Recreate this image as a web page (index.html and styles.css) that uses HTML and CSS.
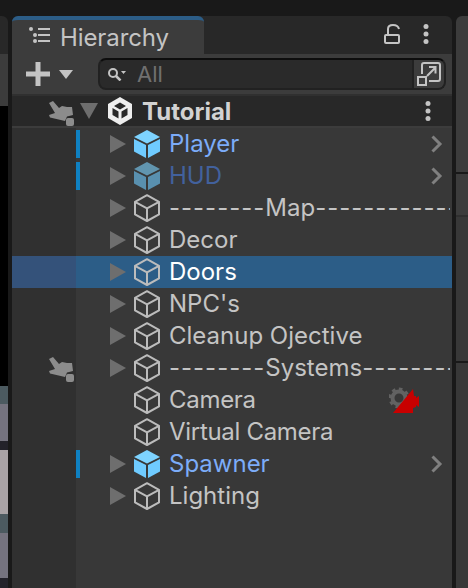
FILE: index.html
```html
<!DOCTYPE html>
<html>
<head>
    <title>Hierarchy</title>
    <link rel="stylesheet" href="styles.css">
</head>
<body>
    <svg class="defs" width="0" height="0">
        <symbol id="cube" viewBox="0 0 26 28">
            <path d="M13 1.2 25 7.8V20.400L13 27 1 20.400V7.800ZM1 7.800 13 14.400 25 7.800M13 14.400V27" fill="none" stroke="#bcbcbc" stroke-width="2" stroke-linejoin="round"/>
        </symbol>
        <symbol id="prefab" viewBox="0 0 26 28">
            <path d="M13 0 26 7 13 13.400 0 7Z" fill="#7dd3ff"/>
            <path d="M0 9 12 15V28L0 21.500Z" fill="#6fcbff"/>
            <path d="M26 9 14 15V28L26 21.500Z" fill="#6fcbff"/>
        </symbol>
        <symbol id="fold" viewBox="0 0 16 20">
            <path d="M0 1 16 10 0 19Z" fill="#6e6e6e"/>
        </symbol>
        <symbol id="chevron" viewBox="0 0 12 18">
            <path d="M1.500 1.500 9 9 1.500 16.500" fill="none" stroke="#808080" stroke-width="3"/>
        </symbol>
        <symbol id="hand" viewBox="0 0 25 26">
            <path d="M0 2 4 0 10 7 13 5 18 6 23 6 24 14 18 15.500 16 20 1 16.500 0 14 6 12Z" fill="#8c8c8c"/>
            <rect x="17" y="17" width="8" height="8" rx="2" fill="#8c8c8c"/>
        </symbol>
    </svg>

    <div class="shell">
        <div class="side-left">
            <div class="sl-tab"></div>
            <div class="sl-bar"></div>
            <div class="sl-black"></div>
            <div class="sl-band"></div>
            <div class="sl-lilac"></div>
            <div class="sl-dark"></div>
            <div class="sl-light"></div>
            <div class="sl-band sl-band2"></div>
            <div class="sl-lilac sl-lilac2"></div>
            <div class="sl-dark"></div>
        </div>

        <div class="panel">
            <div class="tabbar">
                <div class="tab">
                    <svg class="tab-icon" width="21" height="16" viewBox="0 0 21 16">
                        <circle cx="2" cy="2" r="2" fill="#c4c4c4"/>
                        <path d="M9 2H21M9 8H21M9 14H21" stroke="#c4c4c4" stroke-width="2"/>
                        <circle cx="6" cy="8" r="2" fill="#c4c4c4"/>
                        <circle cx="6" cy="14" r="2" fill="#c4c4c4"/>
                    </svg>
                    <span>Hierarchy</span>
                </div>
                <div class="tab-tools">
                    <svg width="16" height="20" viewBox="0 0 16 20">
                        <path d="M4 10V5Q4 1 9 1T15 5" fill="none" stroke="#c4c4c4" stroke-width="2"/>
                        <rect x="1" y="11" width="14" height="8" rx="1" fill="none" stroke="#c4c4c4" stroke-width="2"/>
                    </svg>
                    <svg width="6" height="20" viewBox="0 0 6 20">
                        <circle cx="3" cy="2.500" r="2.500" fill="#c4c4c4"/>
                        <circle cx="3" cy="10" r="2.500" fill="#c4c4c4"/>
                        <circle cx="3" cy="17.500" r="2.500" fill="#c4c4c4"/>
                    </svg>
                </div>
            </div>

            <div class="toolbar">
                <svg class="plus" width="24" height="24" viewBox="0 0 24 24">
                    <path d="M12 0V24M0 12H24" stroke="#c4c4c4" stroke-width="5"/>
                </svg>
                <svg class="plus-arrow" width="14" height="9" viewBox="0 0 14 9">
                    <path d="M0 0H14L7 9Z" fill="#c4c4c4"/>
                </svg>
                <div class="search">
                    <svg class="search-icon" width="18" height="13" viewBox="0 0 18 13">
                        <circle cx="5" cy="5" r="4" fill="none" stroke="#c4c4c4" stroke-width="2"/>
                        <path d="M8 8 12.500 12.500" stroke="#c4c4c4" stroke-width="2.500"/>
                        <path d="M13 3H18L15.500 6Z" fill="#c4c4c4"/>
                    </svg>
                    <span class="search-text">All</span>
                    <div class="search-btn">
                        <svg width="24" height="24" viewBox="0 0 24 24">
                            <path d="M5 12V3Q5 1 7 1H21Q23 1 23 3V17Q23 19 21 19H12" fill="none" stroke="#c4c4c4" stroke-width="2"/>
                            <rect x="1" y="15" width="8" height="8" fill="none" stroke="#c4c4c4" stroke-width="2"/>
                            <path d="M10 14 18 6M12 5H18.500V11.500" fill="none" stroke="#c4c4c4" stroke-width="2"/>
                        </svg>
                    </div>
                </div>
            </div>

            <div class="scene-row">
                <div class="gutter">
                    <svg class="hand" width="25" height="26"><use href="#hand"/></svg>
                </div>
                <svg class="scene-arrow" width="18" height="16" viewBox="0 0 18 16">
                    <path d="M0 0H18L9 16Z" fill="#6e6e6e"/>
                </svg>
                <svg class="unity" width="24" height="28" viewBox="0 0 24 28">
                    <path d="M12 0 24 7V21L12 28 0 21V7Z" fill="#eee"/>
                    <path d="M12 5.500 18 9 12 12.500 6 9ZM4.500 11 10.500 14.500V21.500L4.500 18ZM19.500 11V18L13.500 21.500V14.500Z" fill="#282828"/>
                </svg>
                <span class="scene-name">Tutorial</span>
                <svg class="scene-menu" width="6" height="20" viewBox="0 0 6 20">
                    <circle cx="3" cy="2.500" r="2.500" fill="#c4c4c4"/>
                    <circle cx="3" cy="10" r="2.500" fill="#c4c4c4"/>
                    <circle cx="3" cy="17.500" r="2.500" fill="#c4c4c4"/>
                </svg>
            </div>

            <div class="list">
                <div class="row">
                    <i class="bar"></i>
                    <svg class="fold" width="16" height="20"><use href="#fold"/></svg>
                    <svg class="cube" width="26" height="28"><use href="#prefab"/></svg>
                    <span class="name name-prefab">Player</span>
                    <svg class="chevron" width="12" height="18"><use href="#chevron"/></svg>
                </div>
                <div class="row">
                    <i class="bar"></i>
                    <svg class="fold" width="16" height="20"><use href="#fold"/></svg>
                    <svg class="cube cube-off" width="26" height="28"><use href="#prefab"/></svg>
                    <span class="name name-off">HUD</span>
                    <svg class="chevron" width="12" height="18"><use href="#chevron"/></svg>
                </div>
                <div class="row">
                    <i class="bar bar-none"></i>
                    <svg class="fold" width="16" height="20"><use href="#fold"/></svg>
                    <svg class="cube" width="26" height="28"><use href="#cube"/></svg>
                    <span class="name name-clip"><span class="dash">--------</span>Map<span class="dash">------------</span></span>
                </div>
                <div class="row">
                    <i class="bar bar-none"></i>
                    <svg class="fold" width="16" height="20"><use href="#fold"/></svg>
                    <svg class="cube" width="26" height="28"><use href="#cube"/></svg>
                    <span class="name">Decor</span>
                </div>
                <div class="row row-selected">
                    <i class="bar bar-none"></i>
                    <svg class="fold fold-selected" width="16" height="20"><use href="#fold"/></svg>
                    <svg class="cube" width="26" height="28"><use href="#cube"/></svg>
                    <span class="name name-selected">Doors</span>
                </div>
                <div class="row">
                    <i class="bar bar-none"></i>
                    <svg class="fold" width="16" height="20"><use href="#fold"/></svg>
                    <svg class="cube" width="26" height="28"><use href="#cube"/></svg>
                    <span class="name">NPC's</span>
                </div>
                <div class="row">
                    <i class="bar bar-none"></i>
                    <svg class="fold" width="16" height="20"><use href="#fold"/></svg>
                    <svg class="cube" width="26" height="28"><use href="#cube"/></svg>
                    <span class="name">Cleanup Ojective</span>
                </div>
                <div class="row">
                    <svg class="hand row-hand" width="25" height="26"><use href="#hand"/></svg>
                    <i class="bar bar-none"></i>
                    <svg class="fold" width="16" height="20"><use href="#fold"/></svg>
                    <svg class="cube" width="26" height="28"><use href="#cube"/></svg>
                    <span class="name name-clip"><span class="dash">--------</span>Systems<span class="dash">--------</span></span>
                </div>
                <div class="row">
                    <i class="bar bar-none"></i>
                    <i class="fold-none"></i>
                    <svg class="cube" width="26" height="28"><use href="#cube"/></svg>
                    <span class="name name-tight">Camera</span>
                    <svg class="gizmo" width="32" height="28" viewBox="0 0 32 28">
                        <circle cx="10" cy="12" r="6.500" fill="none" stroke="#626262" stroke-width="4"/>
                        <circle cx="10" cy="12" r="9" fill="none" stroke="#626262" stroke-width="3" stroke-dasharray="3.500 3.500"/>
                        <path d="M4 27 24 3 25 10 27 10 27 12 30 10 30 21 27 19 27 21 24 22 24 27Z" fill="#c80000"/>
                    </svg>
                </div>
                <div class="row">
                    <i class="bar bar-none"></i>
                    <i class="fold-none"></i>
                    <svg class="cube" width="26" height="28"><use href="#cube"/></svg>
                    <span class="name name-tight">Virtual Camera</span>
                </div>
                <div class="row">
                    <i class="bar"></i>
                    <svg class="fold" width="16" height="20"><use href="#fold"/></svg>
                    <svg class="cube" width="26" height="28"><use href="#prefab"/></svg>
                    <span class="name name-prefab">Spawner</span>
                    <svg class="chevron" width="12" height="18"><use href="#chevron"/></svg>
                </div>
                <div class="row">
                    <i class="bar bar-none"></i>
                    <svg class="fold" width="16" height="20"><use href="#fold"/></svg>
                    <svg class="cube" width="26" height="28"><use href="#cube"/></svg>
                    <span class="name">Lighting</span>
                </div>
            </div>
        </div>

        <div class="side-right">
            <div class="sr-a"></div>
            <div class="sr-b"></div>
            <div class="sr-c"></div>
            <div class="sr-d"></div>
        </div>
    </div>
</body>
</html>
```

FILE: styles.css
```css
html, body { margin: 0; height: 100%; }
body { background: #191919; font-family: Inter, "Noto Sans", sans-serif; font-variant-ligatures: none; font-feature-settings: "calt" 0; overflow: hidden; }
.defs { display: block; height: 0; }
svg { display: block; flex: none; }

.shell { display: flex; height: 588px; gap: 4px; }

.side-left { width: 8px; padding-top: 16px; display: flex; flex-direction: column; flex: none; }
.sl-tab { height: 38px; background: #282828; border-top-right-radius: 6px; }
.sl-bar { height: 52px; background: #3c3c3c; }
.sl-black { height: 281px; background: #000; }
.sl-band { height: 18px; background: #4c5a60; }
.sl-lilac { height: 37px; background: #75737f; }
.sl-dark { height: 10px; background: #23222a; }
.sl-light { height: 64px; background: #a9a3a6; }
.sl-band2 { height: 19px; }
.sl-lilac2 { height: 45px; }

.panel { width: 440px; margin-top: 16px; display: flex; flex-direction: column; flex: none; }

.tabbar { height: 38px; background: #282828; display: flex; justify-content: space-between; border-radius: 6px 6px 0 0; }
.tab { width: 192px; box-sizing: border-box; background: #3c3c3c; border-top: 4px solid #2c5d87; border-radius: 6px 6px 0 0; display: flex; align-items: center; padding-left: 17px; gap: 11px; color: #c4c4c4; font-size: 24px; }
.tab span { letter-spacing: -0.1px; margin-left: -1px; }
.tab-icon { margin-bottom: 4px; }
.tab-tools { display: flex; align-items: center; gap: 23px; padding-right: 23px; padding-bottom: 2px; }

.toolbar { height: 40px; background: #3c3c3c; display: flex; align-items: center; padding-left: 14px; border-bottom: 2px solid #303030; }
.plus { margin-right: 9px; }
.plus-arrow { margin-right: 25px; }
.search { width: 348px; height: 32px; box-sizing: border-box; background: #2a2a2a; border: 2px solid #212121; border-top-color: #0d0d0d; border-radius: 8px; display: flex; align-items: center; padding-left: 8px; }
.search-icon { margin-right: 11px; }
.search-text { color: #707070; font-size: 22px; flex: 1; }
.search-btn { width: 32px; height: 28px; box-sizing: border-box; background: #3c3c3c; border-left: 2px solid #212121; border-radius: 0 6px 6px 0; display: flex; align-items: center; justify-content: center; }

.scene-row { height: 30px; background: #282828; border-bottom: 2px solid #3c3c3c; display: flex; align-items: center; }
.gutter { width: 64px; height: 100%; position: relative; flex: none; }
.hand { position: absolute; left: 37px; top: 5px; }
.scene-arrow { margin-left: 4px; margin-right: 10px; }
.unity { margin-right: 10px; }
.scene-name { color: #d2d2d2; font-size: 24px; font-weight: 700; flex: 1; }
.scene-menu { margin-right: 21px; }

.list { flex: 1; background: linear-gradient(90deg, #303030 64px, #383838 64px); }
.row { height: 32px; display: flex; align-items: center; padding-left: 64px; position: relative; overflow: hidden; }
.row-selected { background: linear-gradient(90deg, #34527a 64px, #2c5d87 64px); }
.bar { width: 4px; height: 28px; background: #0f81c2; flex: none; margin-right: 30px; }
.bar-none { background: none; }
.fold { margin-right: 8px; }
.fold-selected path { fill: #6f93ae; }
.fold-none { width: 16px; margin-right: 8px; flex: none; }
.cube { margin-right: 9px; }
.cube-off { opacity: .6; }
.name { color: #c4c4c4; font-size: 24px; white-space: nowrap; flex: 1; overflow: hidden; padding-bottom: 2px; }
.name-clip { margin-right: 2px; }
.name-tight { letter-spacing: -.3px; }
.dash { letter-spacing: 1px; }
.name-prefab { color: #7cacf8; }
.name-off { color: #42619d; }
.name-selected { color: #fff; }
.chevron { margin-right: 9px; }
.gizmo { position: absolute; left: 377px; top: 2px; }

.side-right { width: 12px; margin-top: 16px; display: flex; flex-direction: column; flex: none; }
.sr-a { height: 156px; background: #3c3c3c; border-top-left-radius: 6px; border-bottom: 2px solid #191919; }
.sr-b { height: 41px; background: #3c3c3c; border-bottom: 2px solid #2f2f2f; }
.sr-c { height: 144px; background: #383838; border-bottom: 2px solid #191919; }
.sr-d { flex: 1; background: #383838; }
```
